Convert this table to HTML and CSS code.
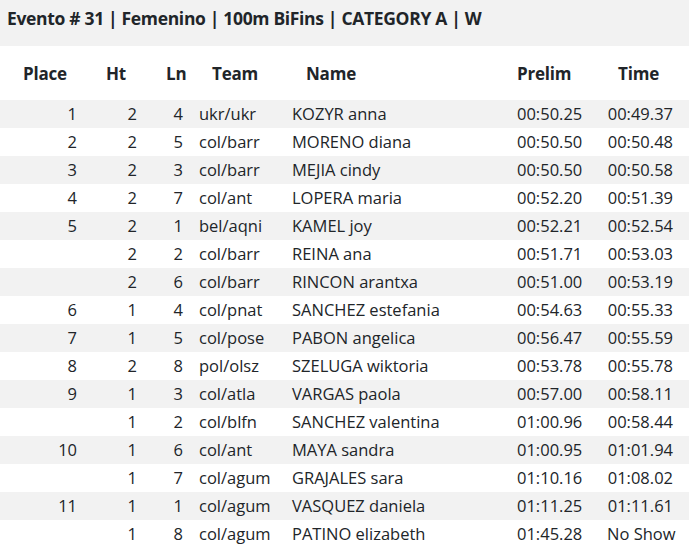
FILE: index.html
```html
<!DOCTYPE html>
<html lang="es">
<head>
<meta charset="utf-8">
<title>Evento # 31</title>
<link rel="stylesheet" href="styles.css">
</head>
<body>
<h1 class="event-title">Evento # 31 | Femenino | 100m BiFins | CATEGORY A | W</h1>
<table class="results">
  <colgroup>
    <col class="c-place"><col class="c-ht"><col class="c-ln"><col class="c-team"><col class="c-name"><col class="c-prelim"><col class="c-time">
  </colgroup>
  <thead>
    <tr>
      <th class="h-place">Place</th>
      <th class="h-ht">Ht</th>
      <th class="h-ln">Ln</th>
      <th class="h-team">Team</th>
      <th class="h-name">Name</th>
      <th class="h-prelim">Prelim</th>
      <th class="h-time">Time</th>
    </tr>
  </thead>
  <tbody>
    <tr><td class="num">1</td><td class="num">2</td><td class="num">4</td><td>ukr/ukr</td><td>KOZYR anna</td><td>00:50.25</td><td class="time">00:49.37</td></tr>
    <tr><td class="num">2</td><td class="num">2</td><td class="num">5</td><td>col/barr</td><td>MORENO diana</td><td>00:50.50</td><td class="time">00:50.48</td></tr>
    <tr><td class="num">3</td><td class="num">2</td><td class="num">3</td><td>col/barr</td><td>MEJIA cindy</td><td>00:50.50</td><td class="time">00:50.58</td></tr>
    <tr><td class="num">4</td><td class="num">2</td><td class="num">7</td><td>col/ant</td><td>LOPERA maria</td><td>00:52.20</td><td class="time">00:51.39</td></tr>
    <tr><td class="num">5</td><td class="num">2</td><td class="num">1</td><td>bel/aqni</td><td>KAMEL joy</td><td>00:52.21</td><td class="time">00:52.54</td></tr>
    <tr><td class="num"></td><td class="num">2</td><td class="num">2</td><td>col/barr</td><td>REINA ana</td><td>00:51.71</td><td class="time">00:53.03</td></tr>
    <tr><td class="num"></td><td class="num">2</td><td class="num">6</td><td>col/barr</td><td>RINCON arantxa</td><td>00:51.00</td><td class="time">00:53.19</td></tr>
    <tr><td class="num">6</td><td class="num">1</td><td class="num">4</td><td>col/pnat</td><td>SANCHEZ estefania</td><td>00:54.63</td><td class="time">00:55.33</td></tr>
    <tr><td class="num">7</td><td class="num">1</td><td class="num">5</td><td>col/pose</td><td>PABON angelica</td><td>00:56.47</td><td class="time">00:55.59</td></tr>
    <tr><td class="num">8</td><td class="num">2</td><td class="num">8</td><td>pol/olsz</td><td>SZELUGA wiktoria</td><td>00:53.78</td><td class="time">00:55.78</td></tr>
    <tr><td class="num">9</td><td class="num">1</td><td class="num">3</td><td>col/atla</td><td>VARGAS paola</td><td>00:57.00</td><td class="time">00:58.11</td></tr>
    <tr><td class="num"></td><td class="num">1</td><td class="num">2</td><td>col/blfn</td><td>SANCHEZ valentina</td><td>01:00.96</td><td class="time">00:58.44</td></tr>
    <tr><td class="num">10</td><td class="num">1</td><td class="num">6</td><td>col/ant</td><td>MAYA sandra</td><td>01:00.95</td><td class="time">01:01.94</td></tr>
    <tr><td class="num"></td><td class="num">1</td><td class="num">7</td><td>col/agum</td><td>GRAJALES sara</td><td>01:10.16</td><td class="time">01:08.02</td></tr>
    <tr><td class="num">11</td><td class="num">1</td><td class="num">1</td><td>col/agum</td><td>VASQUEZ daniela</td><td>01:11.25</td><td class="time">01:11.61</td></tr>
    <tr><td class="num"></td><td class="num">1</td><td class="num">8</td><td>col/agum</td><td>PATINO elizabeth</td><td>01:45.28</td><td class="time">No Show</td></tr>
  </tbody>
</table>
</body>
</html>
```

FILE: styles.css
```css
html, body {
  margin: 0;
  padding: 0;
  background: #ffffff;
}

body {
  font-family: "Open Sans", "Noto Sans", sans-serif;
  color: #212529;
  font-size: 16px;
}

.event-title {
  margin: 0;
  height: 46px;
  box-sizing: border-box;
  padding: 6px 7px 0;
  background: #f2f2f2;
  font-size: 17.5px;
  font-weight: 700;
  letter-spacing: -0.33px;
  line-height: 25px;
  color: #212529;
  white-space: nowrap;
}

.results {
  width: 689px;
  border-collapse: collapse;
  table-layout: fixed;
}

.c-place { width: 85px; }
.c-ht { width: 60px; }
.c-ln { width: 46px; }
.c-team { width: 93px; }
.c-name { width: 225px; }
.c-prelim { width: 90px; }
.c-time { width: 90px; }

.results th {
  height: 54px;
  padding: 0;
  text-align: left;
  font-size: 17px;
  font-weight: 700;
  letter-spacing: -0.2px;
  vertical-align: middle;
  white-space: nowrap;
}

.h-place { padding-left: 23px !important; }
.h-ht { padding-left: 21px !important; }
.h-ln { padding-left: 21px !important; }
.h-team { padding-left: 21px !important; }
.h-name { padding-left: 22px !important; }
.h-prelim { padding-left: 8px !important; }
.h-time { padding-left: 19px !important; }

.results td {
  height: 28px;
  padding: 0 8px;
  font-size: 16.5px;
  line-height: 20px;
  vertical-align: middle;
  white-space: nowrap;
}

.results tbody tr:nth-child(odd) {
  background: #f2f2f2;
}

.results td.num {
  text-align: right;
}

.results td.time {
  text-align: right;
  padding-right: 16px;
}
```
